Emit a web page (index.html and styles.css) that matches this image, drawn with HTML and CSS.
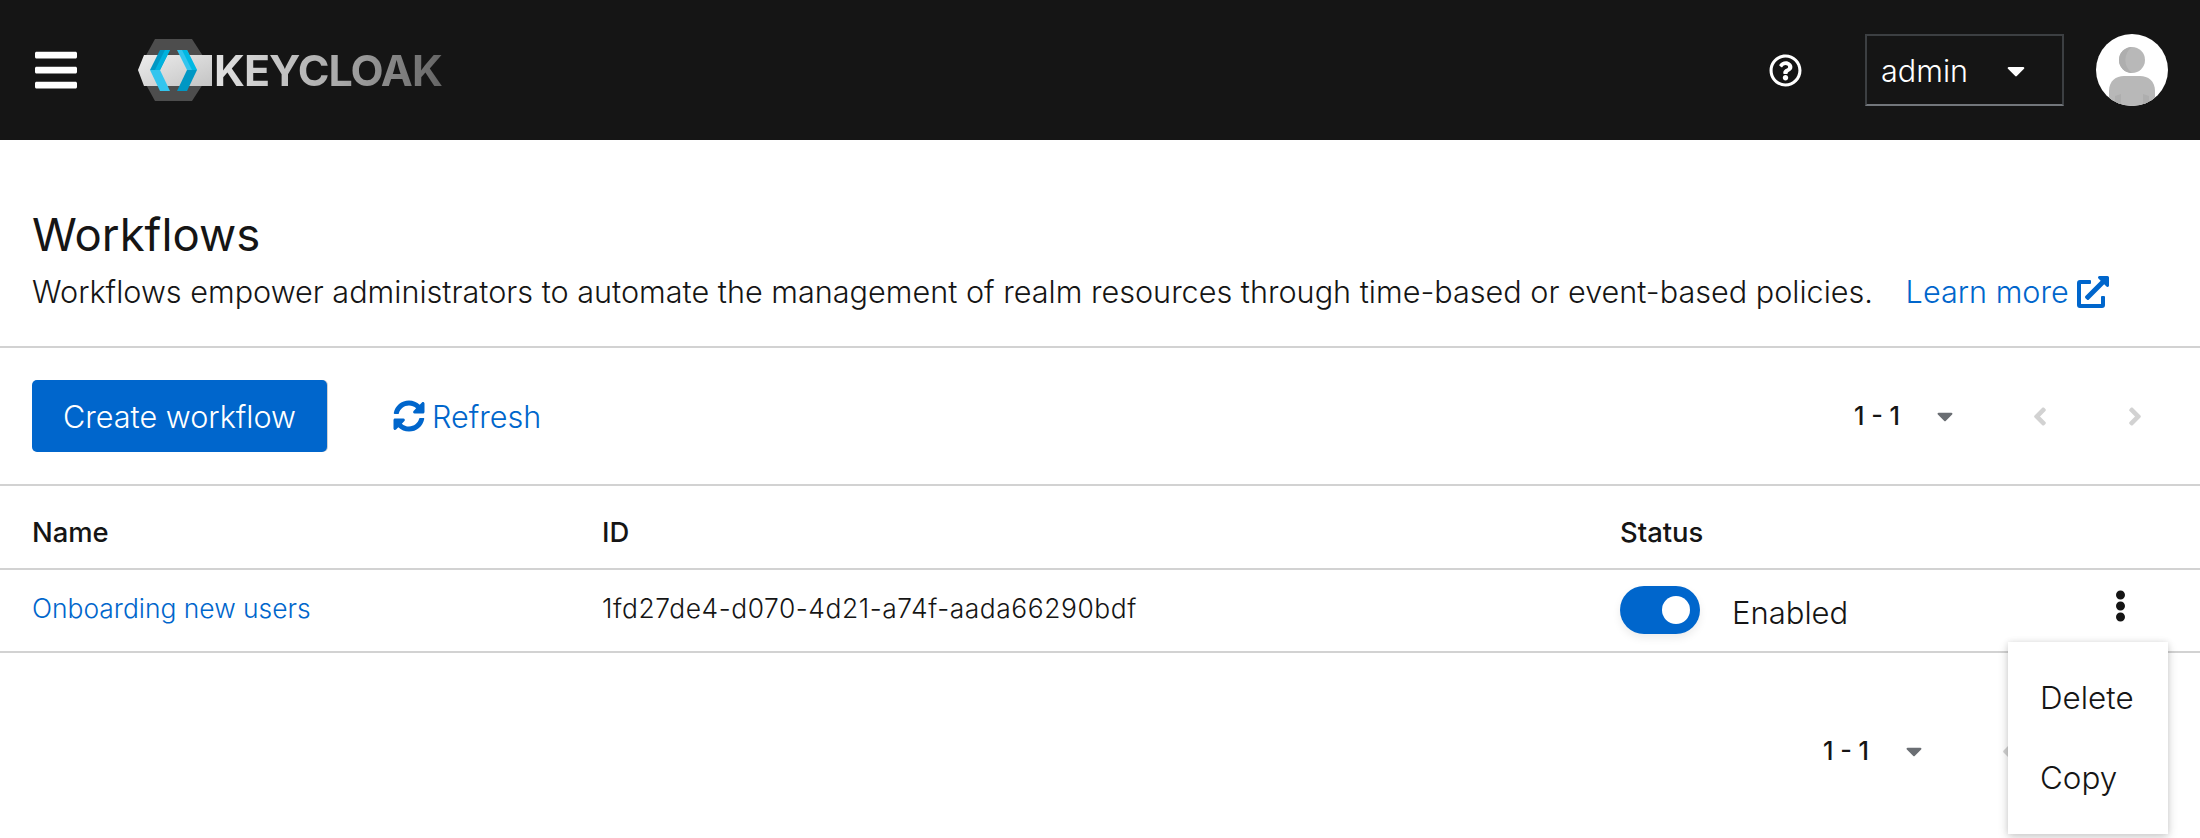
FILE: index.html
```html
<!DOCTYPE html>
<html lang="en">

<head>
    <meta charset="UTF-8" />
    <title>Keycloak - Workflows</title>
    <link rel="stylesheet" href="styles.css">
</head>

<body>

    <!-- Masthead -->
    <header class="masthead">
        <button class="nav-toggle" aria-label="Global navigation">
            <svg viewBox="0 0 448 512" class="icon-bars"><path d="M16 132h416c8.837 0 16-7.163 16-16V76c0-8.837-7.163-16-16-16H16C7.163 60 0 67.163 0 76v40c0 8.837 7.163 16 16 16zm0 160h416c8.837 0 16-7.163 16-16v-40c0-8.837-7.163-16-16-16H16c-8.837 0-16 7.163-16 16v40c0 8.837 7.163 16 16 16zm0 160h416c8.837 0 16-7.163 16-16v-40c0-8.837-7.163-16-16-16H16c-8.837 0-16 7.163-16 16v40c0 8.837 7.163 16 16 16z"/></svg>
        </button>
        <a class="brand" href="#">
            <svg class="brand-mark" viewBox="0 0 76 62" width="76" height="62">
                <defs>
                    <linearGradient id="band" x1="0" y1="0" x2="1" y2="1">
                        <stop offset="0" stop-color="#ececec"/>
                        <stop offset="1" stop-color="#c4c4c4"/>
                    </linearGradient>
                </defs>
                <polygon points="17,0 54,0 74,31 54,62 17,62 0,31" fill="#4d4d4d"/>
                <polygon points="0,31 6,16 74,16 74,47 6,47" fill="url(#band)"/>
                <polygon points="22,11 32,11 22,31 12,31" fill="#0097c4"/>
                <polygon points="27,11 32,11 22,31 17,31" fill="#00b2de"/>
                <polygon points="12,31 22,31 32,52 22,52" fill="#33c5ee"/>
                <polygon points="39,11 49,11 59,31 49,31" fill="#33c5ee"/>
                <polygon points="49,31 59,31 49,52 39,52" fill="#0097c4"/>
                <polygon points="44,11 49,11 59,31 54,31" fill="#00b8e3"/>
            </svg>
            <span class="brand-name">KEYCLOAK</span>
        </a>
        <div class="masthead-tools">
            <button class="help-btn" aria-label="Help">
                <svg viewBox="0 0 512 512" class="icon-help"><path d="M256 8C119.043 8 8 119.083 8 256c0 136.997 111.043 248 248 248s248-111.003 248-248C504 119.083 392.957 8 256 8zm0 448c-110.532 0-200-89.431-200-200 0-110.495 89.472-200 200-200 110.491 0 200 89.471 200 200 0 110.569-89.431 200-200 200zm107.244-255.2c0 67.052-72.421 68.084-72.421 92.863V300c0 6.627-5.373 12-12 12h-45.647c-6.627 0-12-5.373-12-12v-8.659c0-35.745 27.1-50.034 47.579-61.516 17.561-9.845 28.324-16.541 28.324-29.579 0-17.246-21.999-28.693-39.784-28.693-23.189 0-33.894 10.977-48.942 29.969-4.057 5.12-11.46 6.071-16.666 2.124l-27.824-21.098c-5.107-3.872-6.251-11.066-2.644-16.363C184.846 131.491 214.94 112 261.794 112c49.071 0 101.45 38.304 101.45 88.8zM298 368c0 23.159-18.841 42-42 42s-42-18.841-42-42 18.841-42 42-42 42 18.841 42 42z"/></svg>
            </button>
            <button class="user-select">
                <span>admin</span>
                <svg viewBox="0 0 320 512" class="icon-caret"><path d="M31.3 192h257.3c17.8 0 26.7 21.5 14.1 34.1L174.1 354.8c-7.8 7.8-20.5 7.8-28.3 0L17.2 226.1C4.6 213.5 13.5 192 31.3 192z"/></svg>
            </button>
            <svg class="avatar" viewBox="0 0 72 72" width="72" height="72">
                <defs><clipPath id="avatarClip"><circle cx="36" cy="36" r="36"/></clipPath></defs>
                <g clip-path="url(#avatarClip)">
                    <rect width="72" height="72" fill="#fff"/>
                    <circle cx="36" cy="26" r="13" fill="#b8b8b8"/>
                    <path d="M36 13a13 13 0 0 0 0 26a16 16 0 0 1 0-26z" fill="#aeaeae"/>
                    <path d="M13 72V57c0-10 7-15 15-15h16c8 0 15 5 15 15v15z" fill="#b8b8b8"/>
                    <path d="M19 72V62l6-2v12zM53 72V62l-6-2v12z" fill="#aeaeae"/>
                </g>
            </svg>
        </div>
    </header>

    <main>
        <section class="page-title">
            <h1>Workflows</h1>
            <p>Workflows empower administrators to automate the management of realm resources through time-based or event-based policies.
                <a class="learn-more" href="#">Learn more
                    <svg viewBox="0 0 512 512" class="icon-external"><path d="M432,320H400a16,16,0,0,0-16,16V448H64V128H208a16,16,0,0,0,16-16V80a16,16,0,0,0-16-16H48A48,48,0,0,0,0,112V464a48,48,0,0,0,48,48H400a48,48,0,0,0,48-48V336A16,16,0,0,0,432,320ZM488,0h-128c-21.37,0-32.05,25.91-17,41l35.73,35.73L135,320.37a24,24,0,0,0,0,34L157.67,377a24,24,0,0,0,34,0L435.28,133.32,471,169c15,15,41,4.5,41-17V24A24,24,0,0,0,488,0Z"/></svg>
                </a>
            </p>
        </section>

        <!-- Toolbar -->
        <div class="toolbar">
            <button class="btn-primary">Create workflow</button>
            <button class="btn-link">
                <svg viewBox="0 0 512 512" class="icon-refresh"><path d="M370.72 133.28C339.458 104.008 298.888 87.962 255.848 88c-77.458.068-144.328 53.178-162.791 126.85-1.344 5.363-6.122 9.15-11.651 9.15H24.103c-7.498 0-13.194-6.807-11.807-14.176C33.933 94.924 134.813 8 256 8c66.448 0 126.791 26.136 171.315 68.685L463.03 40.97C478.149 25.851 504 36.559 504 57.941V192c0 13.255-10.745 24-24 24H345.941c-21.382 0-32.09-25.851-16.971-40.971l41.75-41.749zM32 296h134.059c21.382 0 32.09 25.851 16.971 40.971l-41.75 41.75c31.262 29.273 71.835 45.319 114.876 45.28 77.418-.07 144.315-53.144 162.787-126.849 1.344-5.363 6.122-9.15 11.651-9.15h57.304c7.498 0 13.194 6.807 11.807 14.176C478.067 417.076 377.187 504 256 504c-66.448 0-126.791-26.136-171.315-68.685L48.97 471.03C33.851 486.149 8 475.441 8 454.059V320c0-13.255 10.745-24 24-24z"/></svg>
                Refresh
            </button>
            <div class="pager">
                <span class="pager-range">1 - 1</span>
                <svg viewBox="0 0 320 512" class="icon-caret pager-caret"><path d="M31.3 192h257.3c17.8 0 26.7 21.5 14.1 34.1L174.1 354.8c-7.8 7.8-20.5 7.8-28.3 0L17.2 226.1C4.6 213.5 13.5 192 31.3 192z"/></svg>
                <svg viewBox="0 0 256 512" class="icon-angle"><path d="M31.7 239l136-136c9.4-9.4 24.6-9.4 33.9 0l22.6 22.6c9.4 9.4 9.4 24.6 0 33.9L127.9 256l96.4 96.4c9.4 9.4 9.4 24.6 0 33.9L201.7 409c-9.4 9.4-24.6 9.4-33.9 0l-136-136c-9.5-9.4-9.5-24.6-.1-34z"/></svg>
                <svg viewBox="0 0 256 512" class="icon-angle"><path d="M224.3 273l-136 136c-9.4 9.4-24.6 9.4-33.9 0l-22.6-22.6c-9.4-9.4-9.4-24.6 0-33.9l96.4-96.4-96.4-96.4c-9.4-9.4-9.4-24.6 0-33.9L54.3 103c9.4-9.4 24.6-9.4 33.9 0l136 136c9.5 9.4 9.5 24.6.1 34z"/></svg>
            </div>
        </div>

        <!-- Workflows table -->
        <table class="workflows">
            <thead>
                <tr>
                    <th class="col-name">Name</th>
                    <th class="col-id">ID</th>
                    <th class="col-status">Status</th>
                    <th></th>
                </tr>
            </thead>
            <tbody>
                <tr>
                    <td class="cell-text"><a href="#">Onboarding new users</a></td>
                    <td class="cell-text cell-id">1fd27de4-d070-4d21-a74f-aada66290bdf</td>
                    <td>
                        <label class="switch">
                            <span class="switch-track"><span class="switch-thumb"></span></span>
                            <span class="switch-label">Enabled</span>
                        </label>
                    </td>
                    <td class="cell-actions">
                        <svg viewBox="0 0 192 512" class="icon-kebab"><path d="M96 184c39.8 0 72 32.2 72 72s-32.2 72-72 72-72-32.2-72-72 32.2-72 72-72zM24 80c0 39.8 32.2 72 72 72s72-32.2 72-72S135.8 8 96 8 24 40.2 24 80zm0 352c0 39.8 32.2 72 72 72s72-32.2 72-72-32.2-72-72-72-72 32.2-72 72z"/></svg>
                        <ul class="action-menu">
                            <li>Delete</li>
                            <li>Copy</li>
                        </ul>
                    </td>
                </tr>
            </tbody>
        </table>

        <div class="table-footer">
            <div class="pager">
                <span class="pager-range">1 - 1</span>
                <svg viewBox="0 0 320 512" class="icon-caret pager-caret"><path d="M31.3 192h257.3c17.8 0 26.7 21.5 14.1 34.1L174.1 354.8c-7.8 7.8-20.5 7.8-28.3 0L17.2 226.1C4.6 213.5 13.5 192 31.3 192z"/></svg>
                <svg viewBox="0 0 256 512" class="icon-angle"><path d="M31.7 239l136-136c9.4-9.4 24.6-9.4 33.9 0l22.6 22.6c9.4 9.4 9.4 24.6 0 33.9L127.9 256l96.4 96.4c9.4 9.4 9.4 24.6 0 33.9L201.7 409c-9.4 9.4-24.6 9.4-33.9 0l-136-136c-9.5-9.4-9.5-24.6-.1-34z"/></svg>
                <svg viewBox="0 0 256 512" class="icon-angle"><path d="M224.3 273l-136 136c-9.4 9.4-24.6 9.4-33.9 0l-22.6-22.6c-9.4-9.4-9.4-24.6 0-33.9l96.4-96.4-96.4-96.4c-9.4-9.4-9.4-24.6 0-33.9L54.3 103c9.4-9.4 24.6-9.4 33.9 0l136 136c9.5 9.4 9.5 24.6.1 34z"/></svg>
            </div>
        </div>
    </main>

</body>

</html>
```

FILE: styles.css
```css
* {
    box-sizing: border-box;
}

html,
body {
    height: 100%;
    overflow: hidden;
}

body {
    margin: 0;
    font-family: 'Inter', sans-serif;
    font-size: 30.6px;
    font-weight: 300;
    color: #151515;
    background: #fff;
}

button {
    font: inherit;
    color: inherit;
    background: none;
    border: none;
    padding: 0;
}

svg {
    display: block;
    fill: currentColor;
}

a {
    color: #06c;
    text-decoration: none;
}

/* Masthead */
.masthead {
    display: flex;
    align-items: center;
    height: 140px;
    padding: 0 32px 0 35px;
    background: #151515;
    color: #fff;
}

.icon-bars {
    width: 42px;
    height: 48px;
}

.brand {
    display: flex;
    align-items: center;
    margin-left: 61px;
}

.brand-name {
    font-family: 'Inter', sans-serif;
    font-size: 43px;
    font-weight: 700;
    line-height: 1;
    letter-spacing: -1px;
    color: transparent;
    background: linear-gradient(90deg, #e2e2e2, #a8a8a8 55%, #656565);
    -webkit-background-clip: text;
    background-clip: text;
}

.masthead-tools {
    display: flex;
    align-items: center;
    margin-left: auto;
}

.icon-help {
    width: 33px;
    height: 33px;
}

.user-select {
    display: flex;
    align-items: center;
    justify-content: space-between;
    width: 199px;
    height: 72px;
    margin-left: 63px;
    padding: 0 37px 0 14px;
    border: 2px solid #3c3f42;
    border-bottom-color: #72767b;
}

.icon-caret {
    width: 18px;
    height: 29px;
}

.avatar {
    margin-left: 32px;
}

/* Page title */
.page-title {
    height: 208px;
    padding: 68px 32px 0;
    border-bottom: 2px solid #d2d2d2;
}

.page-title h1 {
    margin: 0;
    font-size: 45.5px;
    font-weight: 400;
    line-height: 1.2;
}

.page-title p {
    margin: 6px 0 0;
    line-height: 1.5;
}

.learn-more {
    display: inline-flex;
    align-items: center;
    gap: 8px;
    margin-left: 24px;
}

.icon-external {
    width: 32px;
    height: 32px;
}

/* Toolbar */
.toolbar {
    display: flex;
    align-items: center;
    height: 138px;
    padding: 0 32px;
    border-bottom: 2px solid #d2d2d2;
}

.btn-primary {
    width: 295px;
    height: 72px;
    color: #fff;
    background: #06c;
    border-radius: 5px;
    box-shadow: 1px 0 0 #d2d2d2;
}

.btn-link {
    display: flex;
    align-items: center;
    gap: 7px;
    margin-left: 66px;
    color: #06c;
}

.icon-refresh {
    width: 32px;
    height: 32px;
}

.pager {
    display: flex;
    align-items: center;
    margin-left: auto;
    font-size: 25.2px;
    font-weight: 500;
}

.toolbar .pager {
    padding-right: 25px;
}

.pager-range {
    width: 83px;
}

.pager-caret {
    width: 16px;
    height: 26px;
    color: #6a6e73;
}

.icon-angle {
    width: 16px;
    height: 29px;
    margin-left: 79px;
    color: #d2d2d2;
}

/* Table */
.workflows {
    width: 100%;
    border-collapse: collapse;
    table-layout: fixed;
    font-size: 26.4px;
}

.workflows th {
    height: 83px;
    padding: 9px 0 0;
    font-size: 27.4px;
    font-weight: 500;
    text-align: left;
    border-bottom: 2px solid #d2d2d2;
}

.workflows td {
    height: 83px;
    padding: 0 0 2px;
    border-bottom: 2px solid #d2d2d2;
}

.workflows td.cell-text {
    padding-bottom: 5px;
}

.workflows tr > :first-child {
    padding-left: 32px;
}

.col-name {
    width: 602px;
}

.col-id {
    width: 1018px;
}

.col-status {
    width: 440px;
}

.cell-id {
    letter-spacing: 0.57px;
}

.switch {
    display: flex;
    align-items: center;
    gap: 32px;
    font-size: 31px;
}

.switch-track {
    position: relative;
    width: 80px;
    height: 48px;
    border-radius: 24px;
    background: #06c;
    box-shadow: 0 4px 8px rgba(0, 0, 0, 0.08);
}

.switch-thumb {
    position: absolute;
    top: 10px;
    right: 10px;
    width: 28px;
    height: 28px;
    border-radius: 50%;
    background: #fff;
}

.switch-label {
    position: relative;
    top: 3px;
}

.cell-actions {
    position: relative;
}

.icon-kebab {
    width: 13px;
    height: 32px;
    margin: -8px 0 0 54px;
}

.action-menu {
    position: absolute;
    top: 72px;
    right: 32px;
    width: 160px;
    height: 192px;
    margin: 0;
    padding: 16px 0 0;
    list-style: none;
    font-size: 31.4px;
    background: #fff;
    box-shadow: 0 4px 10px rgba(3, 3, 3, 0.16), 0 0 6px rgba(3, 3, 3, 0.1);
}

.action-menu li {
    height: 80px;
    padding-left: 32px;
    line-height: 80px;
}

.table-footer {
    display: flex;
    height: 196px;
    padding: 0 88px 0 0;
    align-items: center;
}

.table-footer .pager {
    padding-right: 0;
}
```
